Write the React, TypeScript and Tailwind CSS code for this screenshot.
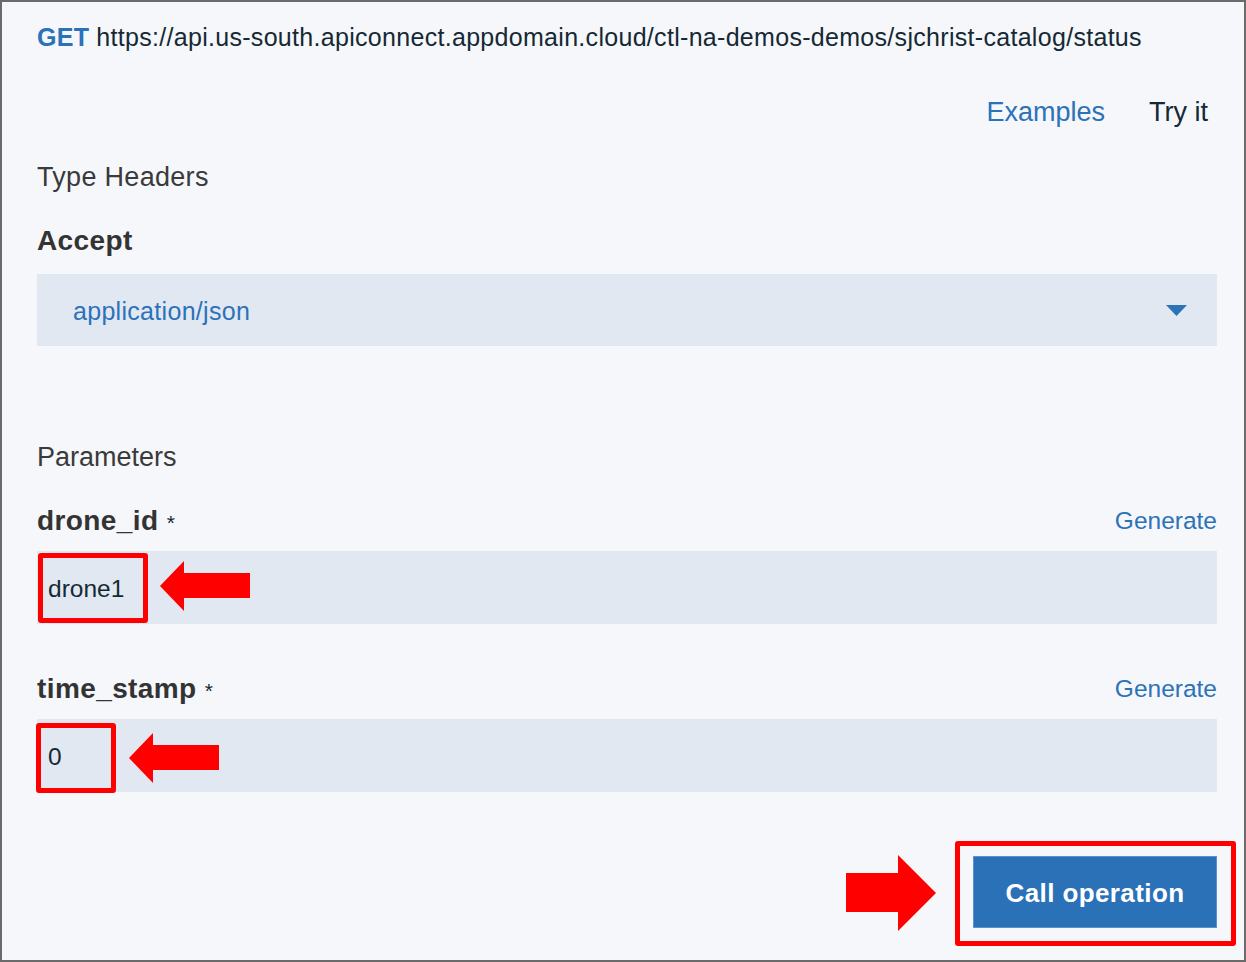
const BLUE = "text-[#2b72b9]"

function Arrow({ dir, className }: { dir: "left" | "right"; className: string }) {
  // block arrow, drawn in a 90x50 box
  const d = dir === "left"
    ? "M0 25 L24 0 L24 12 L90 12 L90 37 L24 37 L24 50 Z"
    : "M90 38 L52 0 L52 18 L0 18 L0 57 L52 57 L52 76 Z"
  const vb = dir === "left" ? "0 0 90 50" : "0 0 90 76"
  return (
    <svg viewBox={vb} preserveAspectRatio="none" className={className}>
      <path d={d} fill="#ff0000" />
    </svg>
  )
}

function Field({ name, value }: { name: string; value: string }) {
  return (
    <div>
      <div className="flex items-center justify-between h-8">
        <span className="text-[28px] font-bold text-[#333] tracking-[0.4px]">
          {name} <span className="text-[21px] font-normal text-[#152935]">*</span>
        </span>
        <span className={`text-[24.5px] ${BLUE}`}>Generate</span>
      </div>
      <div className="mt-[14px] h-[73px] bg-[#e1e8f2] flex items-center pl-[11px] pt-[3px] text-[24.5px] text-[#152935]">
        {value}
      </div>
    </div>
  )
}

export default function App() {
  return (
    <div
      className="relative w-[1246px] h-[962px] border-2 border-[#6a6a6a] bg-[#f5f7fa] pl-[35px] pr-[27px] pt-[21px]"
      style={{ fontFamily: '"Liberation Sans", Arial, sans-serif' }}
    >
      {/* url line */}
      <div className="h-[30px] flex items-center text-[25px] tracking-[0.3px] text-[#152935] whitespace-nowrap">
        <span className={`font-bold ${BLUE} mr-[7px]`}>GET</span>
        https://api.us-south.apiconnect.appdomain.cloud/ctl-na-demos-demos/sjchrist-catalog/status
      </div>

      <div className="mt-[43px] h-8 flex justify-end items-center gap-[44px] text-[27px] pr-[9px]">
        <span className={BLUE}>Examples</span>
        <span className="text-[#152935]">Try it</span>
      </div>

      <div className="mt-[33px] h-8 flex items-center text-[27px] tracking-[0.3px] text-[#3a3a3a]">Type Headers</div>
      <div className="mt-8 h-8 flex items-center text-[28px] tracking-[0.4px] font-bold text-[#333]">Accept</div>

      <div className="mt-[17px] h-[72px] bg-[#e1e8f2] flex items-center justify-between pl-[36px] pr-[30px]">
        <span className={`text-[25px] tracking-[0.3px] ${BLUE} pt-[3px]`}>application/json</span>
        <svg width="21" height="11" viewBox="0 0 21 11">
          <path d="M0 0 H21 L10.5 11 Z" fill="#2b72b9" />
        </svg>
      </div>

      <div className="mt-[95px] h-8 flex items-center text-[27px] text-[#3a3a3a]">Parameters</div>

      <div className="mt-8">
        <Field name="drone_id" value="drone1" />
      </div>
      <div className="mt-[49px]">
        <Field name="time_stamp" value="0" />
      </div>

      <div className="mt-[64px] flex justify-end">
        <button className="w-[244px] h-[72px] bg-[#2a71b8] border border-[#5a93cc] text-white text-[26px] tracking-[0.4px] font-bold pt-[2px]">
          Call operation
        </button>
      </div>

      {/* annotations */}
      <div className="absolute left-[36px] top-[551px] w-[110px] h-[70px] border-[5px] border-[#ff0000] rounded-[3px]" />
      <Arrow dir="left" className="absolute left-[158px] top-[559px] w-[90px] h-[50px]" />

      <div className="absolute left-[34px] top-[721px] w-[80px] h-[70px] border-[5px] border-[#ff0000] rounded-[3px]" />
      <Arrow dir="left" className="absolute left-[127px] top-[731px] w-[90px] h-[50px]" />

      <Arrow dir="right" className="absolute left-[844px] top-[853px] w-[90px] h-[76px]" />
      <div className="absolute left-[953px] top-[839px] w-[281px] h-[105px] border-[5px] border-[#ff0000] rounded-[3px]" />
    </div>
  )
}
